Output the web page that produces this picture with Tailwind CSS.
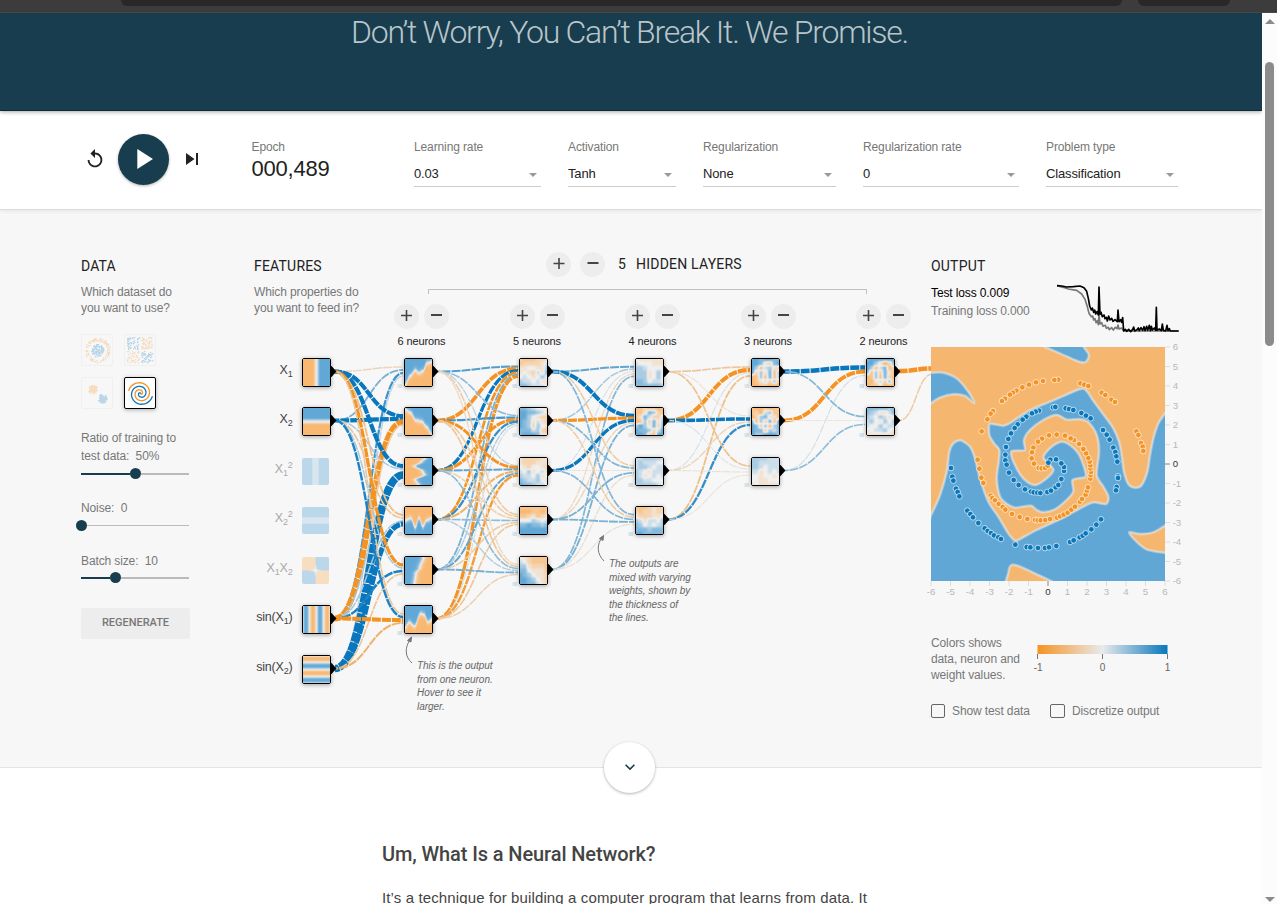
<!DOCTYPE html>
<html lang="en">
<head>
<meta charset="utf-8">
<title>Neural Network Playground</title>
<script src="https://cdn.jsdelivr.net/npm/@tailwindcss/browser@4"></script>
</head>
<body class="flex h-[904px] w-[1277px] flex-col overflow-hidden bg-white font-['Liberation_Sans',Arial,sans-serif] text-xs tracking-[-0.12px] text-[#777]">

<!-- browser toolbar edge -->
<div class="flex h-[13px] shrink-0 border-b border-[#4a4847] bg-[#3c3c3c] pl-[121px]">
  <div class="h-1.5 w-[1001px] rounded-b-[12px] bg-[#282828]"></div>
  <div class="ml-4 h-1.5 w-[92px] rounded-b-[12px] bg-[#282828]"></div>
</div>

<div class="flex min-h-0 flex-1">
<div class="flex w-[1262px] flex-col overflow-hidden">

  <header class="relative z-10 h-[98px] shrink-0 border-b border-[#0f2a37] bg-[#183d4e] shadow-[0_1px_4px_rgba(0,0,0,0.35)]">
    <h1 class="pl-[351px] pt-px font-[Roboto,sans-serif] text-[32px] font-light leading-[36px] tracking-[-1.26px] whitespace-nowrap text-[#b9c5ca]">Don’t Worry, You Can’t Break It. We Promise.</h1>
  </header>

  <!-- top controls -->
  <section class="relative z-[5] flex h-[99px] shrink-0 border-b border-[#dcdcdc] bg-white pl-[84px] shadow-[0_1px_4px_rgba(0,0,0,0.08)]">
    <div class="flex h-[98px] w-[167.500px] items-center pb-px">
      <svg class="mb-0.5 size-[22px]" viewBox="0 0 24 24" fill="#183d4e"><path fill="#222" d="M12 5V1L7 6l5 5V7c3.31 0 6 2.69 6 6s-2.69 6-6 6-6-2.69-6-6H4c0 4.42 3.58 8 8 8s8-3.58 8-8-3.58-8-8-8z"/></svg>
      <div class="ml-3 flex size-[51px] items-center justify-center rounded-full bg-[#183d4e] shadow-[0_1px_3px_rgba(0,0,0,0.3)]">
        <svg class="mb-px mr-px size-[34px]" viewBox="0 0 24 24" fill="#fff"><path d="M8 5v14l11-7z"/></svg>
      </div>
      <svg class="ml-[11px] mb-0.5 size-6" viewBox="0 0 24 24" fill="#222"><path d="M6 18l8.5-6L6 6v12zM16 6v12h2V6h-2z"/></svg>
    </div>
    <div class="w-[162.500px] pt-7">
      <div class="leading-4">Epoch</div>
      <div class="text-[22px] leading-[28px] tracking-[-0.2px] text-[#222]">000,489</div>
    </div>
    <div class="flex gap-[27px] pt-7">
      <label class="w-[127px]"><span class="block leading-4">Learning rate</span><span class="mt-1.5 flex h-[26px] items-center justify-between border-b border-[#ccc] pr-1 text-[13px] tracking-[-0.15px] text-[#222]">0.03<i class="mt-0.5 border-x-4 border-t-4 border-x-transparent border-t-[#999]"></i></span></label>
      <label class="w-[108px]"><span class="block leading-4">Activation</span><span class="mt-1.5 flex h-[26px] items-center justify-between border-b border-[#ccc] pr-1 text-[13px] tracking-[-0.15px] text-[#222]">Tanh<i class="mt-0.5 border-x-4 border-t-4 border-x-transparent border-t-[#999]"></i></span></label>
      <label class="w-[133px]"><span class="block leading-4">Regularization</span><span class="mt-1.5 flex h-[26px] items-center justify-between border-b border-[#ccc] pr-1 text-[13px] tracking-[-0.15px] text-[#222]">None<i class="mt-0.5 border-x-4 border-t-4 border-x-transparent border-t-[#999]"></i></span></label>
      <label class="w-[156px]"><span class="block leading-4">Regularization rate</span><span class="mt-1.5 flex h-[26px] items-center justify-between border-b border-[#ccc] pr-1 text-[13px] tracking-[-0.15px] text-[#222]">0<i class="mt-0.5 border-x-4 border-t-4 border-x-transparent border-t-[#999]"></i></span></label>
      <label class="w-[132px]"><span class="block leading-4">Problem type</span><span class="mt-1.5 flex h-[26px] items-center justify-between border-b border-[#ccc] pr-1 text-[13px] tracking-[-0.15px] text-[#222]">Classification<i class="mt-0.5 border-x-4 border-t-4 border-x-transparent border-t-[#999]"></i></span></label>
    </div>
  </section>

  <!-- playground -->
  <main class="relative flex h-[558px] shrink-0 border-b border-[#e4e4e4] bg-[#f7f7f7] pl-[81px]">

    <div class="w-[173px] pt-12">
      <h2 class="font-[Roboto,sans-serif] text-sm leading-4 tracking-[0.15px] text-[#222]">DATA</h2>
      <p class="mt-2.5 leading-4">Which dataset do<br>you want to use?</p>
      <div class="mt-[18px] grid w-[75px] grid-cols-2 gap-[11px]">
        <div class="size-8 rounded-xs border border-[#f0f0f0]"><svg id="d0" class="size-[30px] opacity-25" viewBox="0 0 30 30"></svg></div>
        <div class="size-8 rounded-xs border border-[#f0f0f0]"><svg id="d1" class="size-[30px] opacity-25" viewBox="0 0 30 30"></svg></div>
        <div class="size-8 rounded-xs border border-[#f0f0f0]"><svg id="d2" class="size-[30px] opacity-25" viewBox="0 0 30 30"></svg></div>
        <div class="size-8 rounded-xs border border-black bg-white shadow-[0_1px_4px_rgba(0,0,0,0.3)]"><svg id="d3" class="size-[30px]" viewBox="0 0 30 30" fill="none" stroke-width="1.3"></svg></div>
      </div>
      <p class="mt-5 leading-[18px]">Ratio of training to<br>test data:&nbsp; 50%</p>
      <div class="mt-[3px] flex h-[11px] w-[108px] items-center"><b class="h-0.5 w-[49px] bg-[#183d4e]"></b><b class="size-[11px] rounded-full bg-[#183d4e]"></b><b class="h-0.5 flex-1 bg-[#bbb]"></b></div>
      <p class="mt-5 leading-[18px]">Noise:&nbsp; 0</p>
      <div class="mt-[3px] -ml-[5px] flex h-[11px] w-[113px] items-center"><b class="size-[11px] rounded-full bg-[#183d4e]"></b><b class="h-px flex-1 bg-[#bbb]"></b></div>
      <p class="mt-[21px] leading-[18px]">Batch size:&nbsp; 10</p>
      <div class="mt-0.5 flex h-[11px] w-[108px] items-center"><b class="h-0.5 w-[28.500px] bg-[#183d4e]"></b><b class="size-[11px] rounded-full bg-[#183d4e]"></b><b class="h-0.5 flex-1 bg-[#bbb]"></b></div>
      <div class="mt-[25px] flex h-[31px] w-[109px] items-center justify-center rounded-xs bg-[#ededed] font-[Roboto,sans-serif] text-[11px] font-medium tracking-[-0.02px]">REGENERATE</div>
    </div>

    <div id="net" class="relative w-[677px]">
      <svg id="links" class="absolute left-0 top-0 h-[557px] w-[677px]" viewBox="254 210 677 557" fill="none"></svg>
      <div class="relative flex">
        <div class="w-[140px] shrink-0 pt-12">
          <h2 class="font-[Roboto,sans-serif] text-sm leading-4 tracking-[0.2px] text-[#222]">FEATURES</h2>
          <p class="mt-2.5 leading-4 whitespace-nowrap">Which properties do<br>you want to feed in?</p>
        </div>
        <div class="w-[517px] pt-[42px]">
          <div class="flex h-[25px] items-center pl-[152px] font-[Roboto,sans-serif] text-sm tracking-[0.2px] text-[#222]">
            <span class="flex size-[25px] items-center justify-center rounded-full bg-[#ededed]"><svg class="mb-0.5 size-3" viewBox="0 0 12 12"><path stroke="#444" stroke-width="1.6" d="M0.5 5.5h11M6 0v11"/></svg></span>
            <span class="ml-[9px] flex size-[25px] items-center justify-center rounded-full bg-[#ededed]"><svg class="mb-px size-3" viewBox="0 0 12 12"><path stroke="#444" stroke-width="2" d="M0.5 5h11"/></svg></span>
            <span class="mb-px ml-[13px]">5</span><span class="mb-px ml-2.5">HIDDEN LAYERS</span>
          </div>
          <div class="mt-3 ml-[34px] h-[5px] w-[439px] border-x border-t border-[#c0c0c0]"></div>
          <div id="layerHeads" class="mt-[10px] flex justify-between"></div>
        </div>
      </div>
      <div id="nodes"></div>
      <p class="absolute left-[163px] top-[449px] text-[10px] italic leading-[13.5px] tracking-[-0.03px] whitespace-nowrap text-[#666]">This is the output<br>from one neuron.<br>Hover to see it<br>larger.</p>
      <p class="absolute left-[355px] top-[347px] text-[10px] italic leading-[13.5px] tracking-[-0.03px] whitespace-nowrap text-[#666]">The outputs are<br>mixed with varying<br>weights, shown by<br>the thickness of<br>the lines.</p>
    </div>

    <div class="relative w-[300px] pt-12">
      <h2 class="font-[Roboto,sans-serif] text-sm leading-4 tracking-[0.2px] text-[#222]">OUTPUT</h2>
      <div class="flex h-[73px]">
        <div class="w-[124.500px] pt-2.5 leading-[18px]"><span class="text-black">Test loss 0.009</span><br>Training loss 0.000</div>
        <svg class="mt-2 h-[53px] w-[125px]" viewBox="408 96 375 159" fill="none" stroke-linejoin="round">
          <path stroke="#777" stroke-width="5" d="M411 107L430 112 445 117 470 121 485 132 495 148 502 170 507 190 514 200 518 198 521 210 525 206 528 218 532 212 535 224 537 195 540 222 545 218 549 229 556 226 559 235 565 232 568 239 575 233 580 240 586 232 591 236 594 225 597 237 605 234 611 243H776"/>
          <path stroke="#000" stroke-width="5" d="M411 107L425 108 440 111 460 110 480 108 492 113 500 124 505 145 509 168 514 180 517 174 521 187 524 180 527 192 531 185 535 195 537 111 540 193 543 187 547 200 552 195 555 206 559 202 562 213 566 198 570 210 575 205 579 214 585 209 592 215 594 180 597 215 602 209 605 217 608 203 611 243 616 238 620 244 626 238 632 245 638 238 641 231 644 243 650 240 655 234 658 242 663 233 668 241 672 230 675 242 680 229 683 241 688 226 691 242 694 229 697 240 703 234 707 241 709 172 711 241 718 237 724 242 727 222 730 241 737 243 741 226 744 242 748 236 751 243H776"/>
        </svg>
      </div>
      <svg id="out" class="block h-[255px] w-[255px] overflow-visible" viewBox="33 36 765 765" font-size="31"></svg>
      <div class="mt-[33px] flex">
        <p class="w-[97px] leading-4 whitespace-nowrap">Colors shows<br>data, neuron and<br>weight values.</p>
        <svg class="mt-2.5 h-[38px] w-[160px] overflow-visible" viewBox="0 0 160 38" font-size="10" fill="#666" text-anchor="middle">
          <defs><linearGradient id="lg"><stop offset="0" stop-color="#f59322"/><stop offset=".5" stop-color="#e8eaeb"/><stop offset="1" stop-color="#0877bd"/></linearGradient></defs>
          <rect x="9.5" y="0" width="130" height="9" fill="url(#lg)"/>
          <path stroke="#777" d="M9.5 9v5M74.500 9v5M139.500 9v5"/>
          <text x="10" y="26">-1</text><text x="74.500" y="26">0</text><text x="139.500" y="26">1</text>
        </svg>
      </div>
      <div class="mt-[19px] flex h-[18px] items-center">
        <i class="size-3.5 rounded-xs border border-[#666]"></i><span class="ml-[7px] w-[98px]">Show test data</span>
        <i class="h-3.5 w-[15px] rounded-xs border border-[#666]"></i><span class="ml-[7px]">Discretize output</span>
      </div>
    </div>

    <div class="absolute left-[604px] top-[532px] z-10 flex size-[51px] items-center justify-center rounded-full bg-white shadow-[0_1px_3px_rgba(0,0,0,0.3)]">
      <svg class="mb-0.5 size-5" viewBox="0 0 24 24" fill="#183d4e"><path d="M16.590 8.590L12 13.170 7.410 8.590 6 10l6 6 6-6z"/></svg>
    </div>
  </main>

  <article class="pl-[382px] pt-[74px]">
    <h2 class="font-[Roboto,sans-serif] text-xl font-medium leading-6 tracking-[-0.1px] text-[#444]">Um, What Is a Neural Network?</h2>
    <p class="mt-[22px] text-[15px] leading-5 tracking-[0.125px] whitespace-nowrap text-[#444]">It’s a technique for building a computer program that learns from data. It</p>
  </article>
</div>

<!-- scrollbar -->
<div class="flex w-[15px] flex-col items-center bg-[#fcfcfc] pt-1.5">
  <i class="border-x-[5px] border-b-[5px] border-x-transparent border-b-[#8a8a8a]"></i>
  <i class="mt-[38px] h-[284px] w-[9px] rounded-full bg-[#8b8b8b]"></i>
  <i class="mt-auto mb-0.5 border-x-[5px] border-t-[5px] border-x-transparent border-t-[#8a8a8a]"></i>
</div>
</div>

<script>
const $ = id => document.getElementById(id);
const ORANGE = [245,147,34], GREY = [232,234,235], BLUE = [8,119,189];
const mix = (a, b, t) => a.map((v, i) => Math.round(v + (b[i] - v) * t));
const weightColor = w => { w = Math.max(-1, Math.min(1, w)); return 'rgb(' + (w < 0 ? mix(GREY, ORANGE, -w) : mix(GREY, BLUE, w)) + ')'; };
const heatColor = v => { v = Math.max(-1, Math.min(1, v)); return v < 0 ? mix([240,240,240], [249,184,113], -v) : mix([240,240,240], [98,168,214], v); };

// --- layer headers
$('layerHeads').innerHTML = [6,5,4,3,2].map(n => `<div class="w-[55px] text-center text-[11px] leading-4 tracking-[-0.1px] whitespace-nowrap text-[#222]">
  <div class="flex justify-between">
    <span class="flex size-[25px] items-center justify-center rounded-full bg-[#ededed]"><svg class="mb-0.5 size-[11px]" viewBox="0 0 11 11"><path stroke="#444" stroke-width="1.600" d="M0 5.500h11M5.500 0v11"/></svg></span>
    <span class="flex size-[25px] items-center justify-center rounded-full bg-[#ededed]"><svg class="mb-0.5 size-[11px]" viewBox="0 0 11 11"><path stroke="#444" stroke-width="2" d="M0 5h11"/></svg></span>
  </div><div class="mt-1">${n} neurons</div></div>`).join('');

// --- network geometry
const X = [302, 404, 519, 635, 751, 866], Y = [358, 407, 457, 506, 556, 605, 655];
const inputs = [0, 1, 5, 6];
// weights[layer][destination][source]
const weights = [
  [[-.25,.5,.75,.2],[1.900,2,-3,-.3],[2,.3,.3,4.200],[-.5,-.4,.3,2.600],[-1.400,.3,.9,-.4],[-.4,.9,-1.900,-.65]],
  [[.65,-1.700,1.400,-1,.5,-1.400],[.4,.75,-1.400,.8,.25,.1],[.2,-1.200,.6,-.65,.6,-.9],[-.35,-.35,-.3,.4,-.35,-.4],[-.2,-.4,.4,.25,.5,-.3]],
  [[.6,.3,.08,-.2,.45],[1.900,-1.400,1.400,-.25,.5],[-.35,.45,-.08,.5,-.15],[.45,-.35,.45,.5,-.12]],
  [[-.4,-1.900,.08,-.5],[-.1,1.600,-.25,.8],[-.45,.06,-.1,-.08]],
  [[2.200,-1.800,.1],[.45,-.05,.4]],
];
let s = '';
const link = (x1, y1, x2, y2, w) => { const m = (x1 + x2) / 2;
  s += `<path d="M${x1} ${y1}C${m} ${y1} ${m} ${y2} ${x2} ${y2}" stroke="${weightColor(w)}" stroke-width="${1 + Math.abs(w) * 1.600}" stroke-dasharray="9 1" stroke-dashoffset="${(x1 + y2) % 7}"/>`; };
weights.forEach((layer, l) => layer.forEach((row, d) => row.forEach((w, i) => {
  const sy = Y[l ? i : inputs[i]] + 13.500;
  link(X[l] + 33, sy, X[l + 1] - 1, Y[d] + 13.500 + (i - (row.length - 1) / 2) / row.length * 12, w);
})));
link(899, 371, 933, 368.500, -2.200); link(899, 420.500, 933, 374, -.35);
const tri = (l, i) => s += `<path fill="#000" d="M${X[l] + 28} ${Y[i] + 8}h1.500l5 5.500-5 5.500h-1.500z"/>`;
inputs.forEach(i => tri(0, i));
[6,5,4,3,2].forEach((n, l) => { for (let i = 0; i < n; i++) { tri(l + 1, i);
  s += `<rect x="${X[l+1] - 6.500}" y="${Y[i] + 26}" width="4.500" height="4" fill="${(l + i) % 3 ? '#d6e2ea' : '#e4e3e0'}"/>`; } });
const labels = [['X','1',''],['X','2',''],['X','1','2'],['X','2','2'],['X','1','x'],['sin(X','1',')'],['sin(X','2',')']];
labels.forEach(([a, sub, c], i) => {
  const tail = c === 'x' ? '<tspan dy="-3">X</tspan><tspan dy="3" font-size="9">2</tspan>' : c === '2' ? '<tspan dy="-8.500" font-size="9">2</tspan>' : c ? `<tspan dy="-3">${c}</tspan>` : '';
  s += `<text x="292.500" y="${Y[i] + 16}" text-anchor="end" font-size="12.500" letter-spacing="-0.2" fill="${inputs.includes(i) ? '#444' : '#aaa'}">${a}<tspan dy="3" font-size="9">${sub}</tspan>${tail}</text>`;
});
s += `<g stroke="#777" fill="none"><path d="M412 663C405 657 404 648 411 638"/><path fill="#777" d="M411.500 637l-4 3.500 3.500 1.500z"/><path d="M604 561C597 554 596 545 603 536"/><path fill="#777" d="M603.500 535.500l-4 3 3.500 2z"/></g>`;
$('links').innerHTML = s;

// --- neuron heat maps
const ease = t => t * t * (3 - 2 * t);
const along = pts => t => { for (let i = 1; i < pts.length; i++) if (t <= pts[i][0]) { const [a, b] = pts[i-1], [c, d] = pts[i]; return b + (d - b) * ease((t - a) / (c - a)); } return pts.at(-1)[1]; };
const below = (pts, k) => { const f = along(pts); return (x, y) => k * Math.tanh((f(x) - y) * 10); };
const rightOf = (pts, k) => { const f = along(pts); return (x, y) => k * Math.tanh((x - f(y)) * 10); };
const grid = rows => { const r = rows.split(' '), n = r.length - 1; return (x, y) => {
  x *= n; y *= n; const i = Math.min(n - 1, x | 0), j = Math.min(n - 1, y | 0), u = ease(x - i), v = ease(y - j);
  const g = (a, b) => (+r[b][a] - 4) / 4;
  return (g(i,j) * (1-u) + g(i+1,j) * u) * (1-v) + (g(i,j+1) * (1-u) + g(i+1,j+1) * u) * v; }; };
const maps = [
  [(x) => (x - .5) * 8, (x, y) => (.5 - y) * 8, x => Math.max(.5, Math.abs(x - .5) * 14 - 1), (x, y) => Math.max(.5, Math.abs(y - .5) * 14 - 1),
   (x, y) => (x - .5) * (.5 - y) * 250, x => Math.sin((x - .5) * 12), (x, y) => Math.sin((.5 - y) * 12)],
  [below([[0,.95],[.2,.62],[.38,.42],[.52,.52],[.65,.45],[.82,.15],[1,.1]], 1), below([[0,.05],[.2,.17],[.4,.45],[.62,.5],[.8,.7],[1,.98]], 1),
   rightOf([[0,.75],[.15,.6],[.3,.35],[.48,.65],[.62,.72],[.8,.38],[1,.5]], 1), below([[0,.5],[.22,.42],[.38,.75],[.52,.4],[.66,.72],[.8,.5],[1,.42]], -1),
   rightOf([[0,.68],[.4,.55],[.6,.4],[1,.35]], -1), below([[0,.8],[.15,.6],[.35,.75],[.58,.28],[.7,.32],[.85,.6],[1,.5]], 1)],
  [grid('21112223 12222353 33443367 34325377 45434643 65545334 77655533'), grid('77654431 88776532 88643222 87635321 87626432 77756211 78887331'),
   grid('32222334 32223333 43244323 54634533 65546344 76556433 87765543'), grid('11111111 00011011 11231231 44465454 77877677 88888888 88888888'), grid('43211111 54211112 66322212 77433312 87643322 88764322 88775322')],
  [grid('43333333 54443333 66544444 66634644 66634644 77645544 77777765'), grid('11211011 11376211 13752251 01627361 68637276 87762588 88721887'),
   grid('55666653 56555443 56654554 65435554 65345455 66554443 66666543'), grid('11123222 21223223 32223344 65355465 76454566 77767777 88777777')],
  [grid('88788778 88732787 86156327 82637168 01617160 01352610 00110001'), grid('10010111 12056111 02673310 71627187 87261678 87726578 86688867'),
   grid('66665556 66555556 66545555 55345454 44344344 44334444 34333333')],
  [grid('78888888 88630278 86157127 71627318 01617210 10352610 01130011'), grid('77777676 76533577 65465346 56436465 54464555 34556433 33333323')],
];
const put = (l, i) => {
  const on = l || inputs.includes(i), box = document.createElement('div'), c = document.createElement('canvas');
  box.className = on ? 'absolute size-[29px] overflow-hidden rounded-xs border border-black shadow-[0_1px_4px_rgba(0,0,0,0.35)]' : 'absolute size-[27px] overflow-hidden rounded-xs opacity-40';
  box.style.left = X[l] - 254 + 'px'; box.style.top = Y[i] - 210 + (on ? 0 : .5) + 'px';
  c.className = 'block size-full'; c.width = c.height = 30;
  const ctx = c.getContext('2d'), img = ctx.createImageData(30, 30);
  for (let y = 0; y < 30; y++) for (let x = 0; x < 30; x++) img.data.set([...heatColor(maps[l][i]((x + .5) / 30, (y + .5) / 30)), 255], (y * 30 + x) * 4);
  ctx.putImageData(img, 0, 0); box.append(c); $('nodes').append(box);
};
maps.forEach((m, l) => m.forEach((_, i) => put(l, i)));

// --- output plot
const smooth = str => { const p = str.split(' ').map(q => q.split(',').map(Number)), n = p.length; let d = `M${p[0]}`;
  for (let i = 0; i < n; i++) { const a = p[(i+n-1)%n], b = p[i], c = p[(i+1)%n], e = p[(i+2)%n], k = 7;
    d += `C${b[0]+(c[0]-a[0])/k} ${b[1]+(c[1]-a[1])/k} ${c[0]-(e[0]-b[0])/k} ${c[1]-(e[1]-b[1])/k} ${c}`; } return d + 'Z'; };
const regions = [
  '15,15 340,22 375,36 430,60 480,81 498,80 507,60 503,15 760,15 760,200 735,235 715,265 700,310 690,360 682,410 665,450 645,458 625,447 612,410 605,360 597,320 580,280 550,238 520,197 500,168 480,162 400,196 330,225 270,264 250,272 225,268 208,268 208,300 222,325 238,345 236,380 230,430 240,485 262,508 285,518 315,514 335,513 350,525 370,532 405,523 440,495 460,470 457,437 475,430 497,425 492,395 475,355 450,330 425,320 395,335 370,365 385,385 400,405 380,430 345,450 310,430 285,390 273,352 290,347 315,345 312,315 330,285 370,255 410,240 440,254 480,253 505,262 530,300 537,350 530,420 550,455 565,485 558,507 520,502 480,520 430,548 350,585 300,612 285,617 265,595 235,545 205,500 180,430 165,370 150,335 122,316 100,325 88,350 80,410 60,480 33,540 15,570 15,220 33,205 60,188 100,178 135,183 163,204 145,170 110,130 70,113 33,113 15,113',
  '268,765 266,710 275,690 300,695 350,718 390,737 430,765', '760,555 735,572 700,592 660,597 628,592 645,615 680,643 735,653 760,653'];
const orangeDots = '415,134 403,135 369,138 348,142 327,149 307,157 289,167 279,173 270,179 255,191 246,198 219,228 212,236 202,253 185,289 481,145 493,149 505,153 545,173 556,180 574,194 585,201 649,289 655,300 663,324 668,335 670,348 173,374 178,401 184,428 190,444 212,482 217,489 225,496 236,507 248,516 256,524 276,537 299,546 322,552 345,555 353,556 362,556 376,555 390,552 411,548 420,544 431,539 443,533 454,524 465,515 480,500 486,492 497,479 501,467 504,457 511,431 512,420 513,411 511,400 511,391 509,380 505,369 498,355 490,342 477,327 462,315 452,310 435,302 410,299 387,301 366,311 354,320 340,338 336,352 335,370 342,386 356,399 365,400 375,399 383,392';
const blueDots = '399,217 406,216 437,220 447,222 460,225 484,234 498,242 512,250 549,285 560,299 569,314 580,338 586,351 589,364 592,380 594,424 594,429 590,456 588,466 357,227 347,230 336,235 319,245 308,254 293,268 284,279 273,295 265,312 258,336 256,359 256,376 260,389 267,413 281,435 296,450 315,463 333,470 341,472 352,473 361,474 382,471 393,467 407,457 415,450 424,432 432,408 432,396 424,385 408,373 391,374 385,383 93,399 97,425 100,437 108,461 113,471 118,484 142,527 151,537 159,547 175,564 194,580 203,588 213,594 222,601 235,607 243,612 286,629 320,636 331,637 354,639 375,639 387,637 409,633 450,621 461,616 479,607 488,602 497,595 514,583 529,569 543,553';
let o = '<clipPath id="cp"><rect x="33" y="36" width="702" height="702"/></clipPath><g clip-path="url(#cp)"><rect x="33" y="36" width="702" height="702" fill="#61a7d5"/>';
regions.forEach(r => { const d = smooth(r); o += `<path d="${d}" fill="#f5b670" stroke="#e8e8e6" stroke-opacity=".4" stroke-width="9"/><path d="${d}" fill="none" stroke="#e8e8e6" stroke-opacity=".5" stroke-width="4"/>`; });
const dots = (list, c) => list.split(' ').forEach(p => { const [x, y] = p.split(','); o += `<circle cx="${x}" cy="${y}" r="8.500" fill="${c}" stroke="#fff" stroke-opacity=".8" stroke-width="2.500"/>`; });
dots(orangeDots, '#f59322'); dots(blueDots, '#0877bd');
o += '</g>';
for (let v = -6; v <= 6; v++) { const c = v ? '#b8b8b8' : '#333', t = v ? '#ddd' : '#888', y = 387 - v * 58.500, x = 384 + v * 58.500;
  o += `<path stroke="${t}" stroke-width="3" d="M735 ${y}h15M${x} 738v15"/><text x="758" y="${y + 10}" font-size="29" fill="${c}">${v}</text><text x="${x}" y="780" text-anchor="middle" fill="${c}" font-size="29">${v}</text>`; }
$('out').innerHTML = o;

// --- dataset thumbnails
let seed = 7; const rnd = () => (seed = seed * 16807 % 2147483647) / 2147483647;
const px = (x, y, b) => `<rect x="${Math.round(x)}" y="${Math.round(y)}" width="1.300" height="1.300" fill="${b ? '#0877bd' : '#f59322'}"/>`;
let a = ['', '', ''];
for (let i = 0; i < 220; i++) {
  const th = rnd() * 6.283, b = i % 2, r = b ? 6 * Math.sqrt(rnd()) : 9.500 + rnd() * 3;
  a[0] += px(15 + r * Math.cos(th), 15 + r * Math.sin(th), b);
  const x = rnd() * 26 + 1.500, y = rnd() * 26 + 1.500; if (Math.abs(x - 15) > 1 && Math.abs(y - 15) > 1) a[1] += px(x, y, (x < 15) === (y < 15));
  const q = 4.500 * rnd(); a[2] += px((b ? 20 : 10) + q * Math.cos(th), (b ? 20.500 : 11) + q * Math.sin(th), b);
}
a.forEach((h, i) => $('d' + i).innerHTML = h);
const arm = k => { let d = ''; for (let t = 0; t <= 1; t += .02) { const r = 12.500 * t, th = 1.750 * t * 6.283 + k; d += (d ? 'L' : 'M') + (15.500 + r * Math.sin(th)).toFixed(2) + ' ' + (15.500 + r * Math.cos(th)).toFixed(2); } return d; };
$('d3').innerHTML = `<path stroke="#f59322" d="${arm(0)}"/><path stroke="#0877bd" d="${arm(3.1416)}"/>`;
</script>
</body>
</html>
